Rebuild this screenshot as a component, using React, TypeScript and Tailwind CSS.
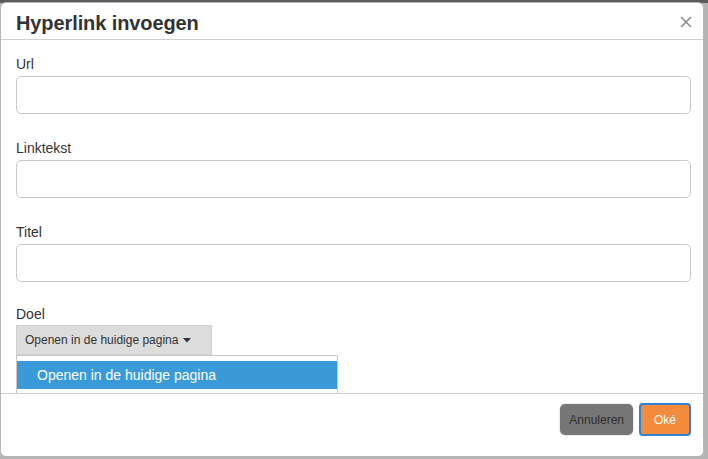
const font = { fontFamily: '"Liberation Sans", Arial, sans-serif' };

function Field({ label }: { label: string }) {
  return (
    <div className="mb-[24px]">
      <label className="block text-[14px] leading-[20px] text-[#333] mb-[2px]">{label}</label>
      <input
        type="text"
        className="block w-full h-[38px] rounded-[5px] border border-[#c8c8c8] bg-white px-3 outline-none"
      />
    </div>
  );
}

export default function App() {
  return (
    <div
      className="w-[708px] h-[459px] bg-[#b4b4b4] border-t-[3px] border-[#5c5c5c] flex"
      style={font}
    >
      <div className="flex-1 mr-[4px] mb-[2px] -mt-[1px] bg-white rounded-[6px] border border-[#b8b8b8] flex flex-col overflow-hidden">
        <div className="h-[37px] pl-[15px] pr-[11px] pt-[8px] flex items-start justify-between border-b border-[#cfcfcf]">
          <h1 className="text-[20px] leading-[24px] font-bold text-[#333] tracking-[-0.1px]">Hyperlink invoegen</h1>
          <button className="mt-[5px] w-[12px] h-[12px] flex items-center justify-center">
            <svg width="12" height="12" viewBox="0 0 12 12">
              <path d="M1 1 L11 11 M11 1 L1 11" stroke="#8a8a8a" strokeWidth="1.6" />
            </svg>
          </button>
        </div>

        <div className="relative h-[353px] overflow-hidden pl-[15px] pr-[12px] pt-[14px]">
          <Field label="Url" />
          <Field label="Linktekst" />
          <Field label="Titel" />
          <div className="-mt-[2px]">
            <label className="block text-[14px] leading-[20px] text-[#333] mb-[1px]">Doel</label>
            <div className="relative w-[196px]">
              <button className="w-[196px] h-[30px] bg-[#dcdcdc] border border-[#cfcfcf] flex items-center pl-[8px] text-[12px] text-[#333]">
                Openen in de huidige pagina
                <svg width="8" height="5" viewBox="0 0 8 5" className="ml-[5px]">
                  <path d="M0 0 L8 0 L4 4.5 Z" fill="#333" />
                </svg>
              </button>
              <div className="absolute left-0 top-[30px] w-[322px] h-[60px] bg-white border border-[#c8c8c8] pt-[5px]">
                <div className="h-[28px] bg-[#3a9ad9] text-white text-[14px] leading-[28px] pl-[20px]">
                  Openen in de huidige pagina
                </div>
              </div>
            </div>
          </div>
        </div>

        <div className="flex-1 border-t border-[#cfcfcf] flex justify-end items-start pt-[10px] pr-[12px] gap-[6px]">
          <button className="h-[31px] px-[9px] rounded-[5px] bg-[#767676] text-[#2f2f2f] text-[12px] ring-1 ring-[#ececec]">
            Annuleren
          </button>
          <button className="h-[33px] -mt-[1px] w-[52px] rounded-[4px] bg-[#f28b3b] text-white text-[12px] border-[2px] border-[#2f82d0]">
            Oké
          </button>
        </div>
      </div>
    </div>
  );
}
